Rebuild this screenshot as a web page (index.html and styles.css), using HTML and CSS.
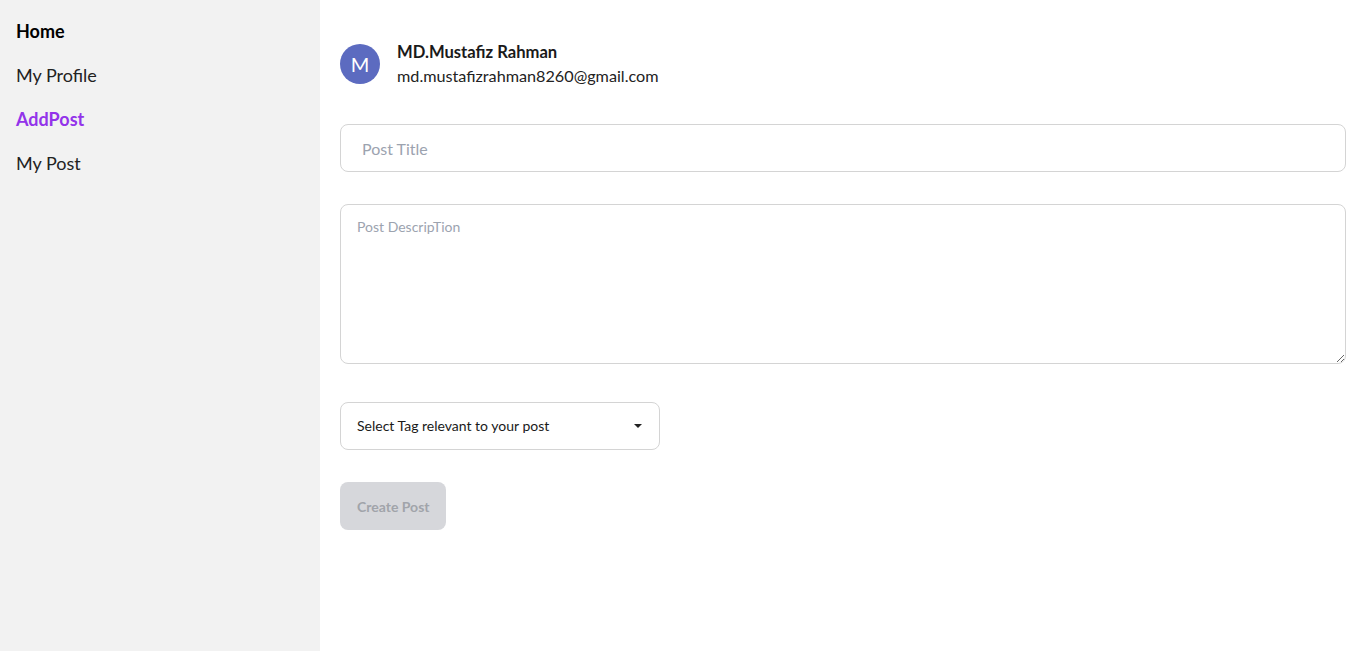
FILE: index.html
```html
<!DOCTYPE html>
<html lang="en">
<head>
<meta charset="utf-8">
<title>Add Post</title>
<link rel="stylesheet" href="styles.css">
</head>
<body>
<div class="layout">
  <aside class="sidebar">
    <nav class="nav">
      <a class="nav-item bold" href="#">Home</a>
      <a class="nav-item" href="#">My Profile</a>
      <a class="nav-item bold active" href="#">AddPost</a>
      <a class="nav-item" href="#">My Post</a>
    </nav>
  </aside>
  <main class="main">
    <div class="user">
      <div class="avatar">M</div>
      <div class="user-info">
        <div class="user-name">MD.Mustafiz Rahman</div>
        <div class="user-email">md.mustafizrahman8260@gmail.com</div>
      </div>
    </div>
    <form class="form">
      <input class="input title" type="text" placeholder="Post Title">
      <textarea class="input desc" placeholder="Post DescripTion"></textarea>
      <div class="select">
        <span>Select Tag relevant to your post</span>
        <svg class="caret" width="8" height="4" viewBox="0 0 8 4"><path d="M0 0 L8 0 L4 4 Z" fill="#222"/></svg>
      </div>
      <button class="btn" type="button" disabled>Create Post</button>
    </form>
  </main>
</div>
</body>
</html>
```
FILE: styles.css
```css
* { box-sizing: border-box; }
html, body { margin: 0; height: 100%; }
body { font-family: "Lato", "Open Sans", sans-serif; color: #1f1f1f; background: #fff; }
.layout { display: flex; min-height: 651px; }
.sidebar { width: 320px; flex: none; background: #f2f2f2; padding: 18px 16px; }
.nav { display: flex; flex-direction: column; gap: 18px; }
.nav-item { font-size: 18px; line-height: 26px; color: #222; text-decoration: none; }
.nav-item.bold { font-weight: 700; color: #000; }
.nav-item.active { color: #9333ea; }
.main { flex: 1; padding: 44px 20px 20px 20px; }
.user { display: flex; align-items: flex-start; gap: 17px; height: 40px; }
.avatar { width: 40px; height: 40px; border-radius: 50%; background: #5c6bc0; color: #fff; display: flex; align-items: center; justify-content: center; font-size: 20px; }
.user-info { margin-top: -2px; }
.user-name { font-size: 16.6px; font-weight: 700; color: #1a1a1a; line-height: 20px; }
.user-email { font-size: 16.2px; color: #222; line-height: 20px; margin-top: 4px; }
.form { display: flex; flex-direction: column; align-items: flex-start; margin-top: 40px; }
.input { width: 100%; border: 1px solid #d4d4d4; border-radius: 8px; font-family: inherit; outline: none; background: #fff; }
.title { height: 48px; padding: 0 21px; font-size: 16px; }
.title::placeholder { color: #9ca3af; }
.desc { height: 160px; margin-top: 32px; padding: 13px 16px; font-size: 14px; resize: vertical; }
.desc::placeholder { color: #9ca3af; }
.select { width: 320px; height: 48px; margin-top: 38px; border: 1px solid #d4d4d4; border-radius: 8px; display: flex; align-items: center; justify-content: space-between; padding: 0 17px 1px 16px; font-size: 14px; color: #1a1a1a; }
.btn { margin-top: 32px; height: 48px; padding: 0 16px 0 17px; border: none; border-radius: 8px; background: #d6d7db; color: #a1a4aa; font-family: inherit; font-size: 14px; font-weight: 700; }
```
